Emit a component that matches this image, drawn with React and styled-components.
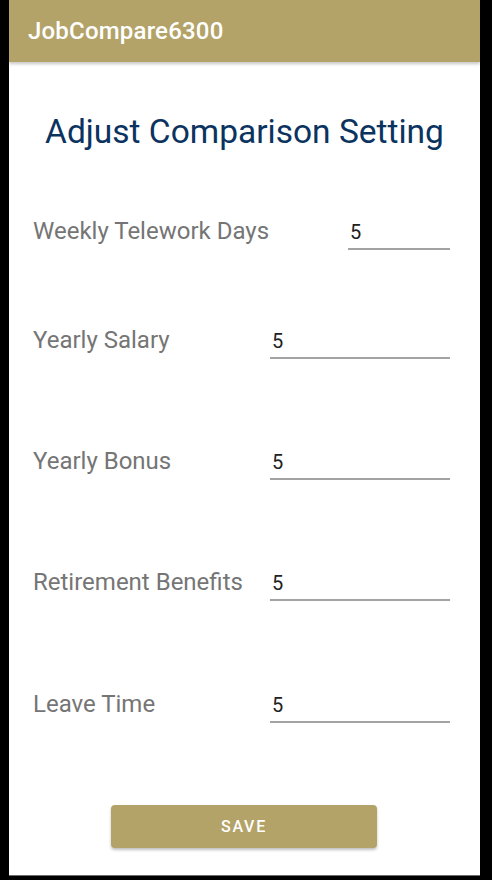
import React from 'react'
import styled, { createGlobalStyle } from 'styled-components'

const GlobalStyle = createGlobalStyle`
  body {
    margin: 0;
    background: #000;
    font-family: Roboto, "Noto Sans", sans-serif;
  }
`

const rows = [
  { label: 'Weekly Telework Days', top: 65, width: 102 },
  { label: 'Yearly Salary', top: 76, width: 180 },
  { label: 'Yearly Bonus', top: 88, width: 180 },
  { label: 'Retirement Benefits', top: 88, width: 180 },
  { label: 'Leave Time', top: 89, width: 180 },
]

const App = () => {
  return (
    <Frame>
      <GlobalStyle />
      <Screen>
        <AppBar>
          <AppTitle>JobCompare6300</AppTitle>
        </AppBar>
        <Content>
          <Heading>Adjust Comparison Setting</Heading>
          {rows.map((r) => (
            <Row key={r.label} $top={r.top}>
              <Label>{r.label}</Label>
              <Field $width={r.width} defaultValue="5" />
            </Row>
          ))}
          <SaveButton>Save</SaveButton>
        </Content>
      </Screen>
    </Frame>
  )
}

export default App

const Frame = styled.div`
  width: 492px;
  height: 880px;
  padding-left: 9px;
  box-sizing: border-box;
  overflow: hidden;
`

const Screen = styled.div`
  width: 471px;
  height: 875px;
  background: #fff;
  border-bottom: 1px solid #6b6b6b;
  display: flex;
  flex-direction: column;
`

const AppBar = styled.div`
  height: 62px;
  background: #b3a369;
  display: flex;
  align-items: center;
  padding-left: 19px;
  box-shadow: 0 2px 3px rgba(0, 0, 0, 0.22);
  position: relative;
  z-index: 1;
`

const AppTitle = styled.h1`
  margin: 0;
  color: #fff;
  font-size: 24px;
  font-weight: 500;
  letter-spacing: 0.2px;
`

const Content = styled.div`
  display: flex;
  flex-direction: column;
  padding: 0 30px 0 24px;
`

const Heading = styled.h2`
  margin: 50px 0 0 -24px;
  width: 471px;
  text-align: center;
  font-size: 33.5px;
  line-height: 1.2;
  font-weight: 400;
  color: #0b3360;
`

const Row = styled.div`
  display: flex;
  align-items: baseline;
  justify-content: space-between;
  margin-top: ${(p) => p.$top}px;
`

const Label = styled.span`
  font-size: 24px;
  line-height: 1.2;
  color: #757575;
`

const Field = styled.input`
  width: ${(p) => p.$width}px;
  box-sizing: border-box;
  font-family: inherit;
  font-size: 20px;
  line-height: 24px;
  color: #212121;
  border: none;
  border-bottom: 2px solid #a3a3a3;
  padding: 0 0 4px 2px;
  margin: 0;
  outline: none;
  background: transparent;
`

const SaveButton = styled.button`
  align-self: center;
  margin: 82px 0 0 5px;
  width: 266px;
  height: 43px;
  border: none;
  border-radius: 4px;
  background: #b3a369;
  color: #fff;
  font-family: inherit;
  font-size: 16px;
  font-weight: 500;
  letter-spacing: 1.7px;
  text-transform: uppercase;
  box-shadow: 0 2px 3px rgba(0, 0, 0, 0.25);
`
